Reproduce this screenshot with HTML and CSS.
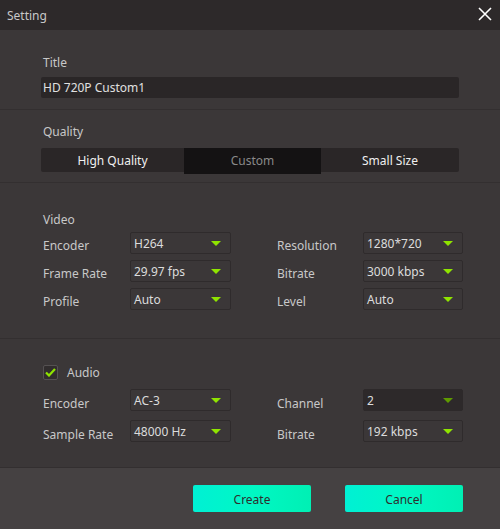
FILE: index.html
```html
<!DOCTYPE html>
<html lang="en">
<head>
    <meta charset="UTF-8">
    <title>Setting</title>
    <link rel="stylesheet" href="styles.css">
</head>
<body>
    <div class="dialog">
        <div class="titlebar">
            <span class="titlebar-text">Setting</span>
            <svg class="close" width="14" height="14" viewBox="0 0 14 14">
                <path d="M1 1L13 13M13 1L1 13" stroke="#fff" stroke-width="1.6" fill="none"/>
            </svg>
        </div>

        <div class="section section-title">
            <div class="label">Title</div>
            <div class="text-input">HD 720P Custom1</div>
        </div>

        <div class="section section-quality">
            <div class="label">Quality</div>
            <div class="segments">
                <div class="seg">High Quality</div>
                <div class="seg seg-active">Custom</div>
                <div class="seg">Small Size</div>
            </div>
        </div>

        <div class="section section-video">
            <div class="label">Video</div>
            <div class="grid">
                <div class="field-label">Encoder</div>
                <div class="select"><span>H264</span><i class="arrow"></i></div>
                <div class="field-label right">Resolution</div>
                <div class="select"><span>1280*720</span><i class="arrow"></i></div>

                <div class="field-label">Frame Rate</div>
                <div class="select"><span>29.97 fps</span><i class="arrow"></i></div>
                <div class="field-label right">Bitrate</div>
                <div class="select"><span>3000 kbps</span><i class="arrow"></i></div>

                <div class="field-label">Profile</div>
                <div class="select"><span>Auto</span><i class="arrow"></i></div>
                <div class="field-label right">Level</div>
                <div class="select"><span>Auto</span><i class="arrow"></i></div>
            </div>
        </div>

        <div class="section section-audio">
            <div class="check-row">
                <span class="checkbox">
                    <svg width="11" height="9" viewBox="0 0 11 9">
                        <path d="M1 4.5L4 7.5L10 1" stroke="#8fe400" stroke-width="2.2" fill="none"/>
                    </svg>
                </span>
                <span class="check-label">Audio</span>
            </div>
            <div class="grid grid-audio">
                <div class="field-label">Encoder</div>
                <div class="select"><span>AC-3</span><i class="arrow"></i></div>
                <div class="field-label right">Channel</div>
                <div class="select select-dim"><span>2</span><i class="arrow"></i></div>

                <div class="field-label">Sample Rate</div>
                <div class="select"><span>48000 Hz</span><i class="arrow"></i></div>
                <div class="field-label right">Bitrate</div>
                <div class="select"><span>192 kbps</span><i class="arrow"></i></div>
            </div>
        </div>

        <div class="footer">
            <button class="btn">Create</button>
            <button class="btn">Cancel</button>
        </div>
    </div>
</body>
</html>
```

FILE: styles.css
```css
body {
    margin: 0;
    font-family: 'Noto Sans', 'Open Sans', Arial, sans-serif;
    font-size: 12px;
    background-color: #3b3738;
    color: #c8c8c8;
}
.dialog {
    width: 500px;
    height: 529px;
    display: flex;
    flex-direction: column;
    background-color: #3b3738;
}
.titlebar {
    height: 30px;
    background-color: #2d292a;
    display: flex;
    align-items: center;
    justify-content: space-between;
    padding: 0 8px 0 7px;
}
.titlebar-text {
    color: #c8c8c8;
}
.close {
    display: block;
    margin-bottom: 2px;
}
.section {
    padding: 0 37px 0 41px;
    border-bottom: 1px solid #332f30;
}
.label {
    height: 16px;
    line-height: 18px;
    padding-left: 2px;
}
.section-title {
    padding-top: 24px;
    padding-bottom: 11px;
}
.text-input {
    margin-top: 7px;
    width: 418px;
    height: 21px;
    line-height: 22px;
    background-color: #2a2627;
    border-radius: 2px;
    padding-left: 2px;
    box-sizing: border-box;
    color: #e0e0e0;
}
.section-quality {
    padding-top: 13px;
    padding-bottom: 10px;
}
.segments {
    margin-top: 9px;
    width: 418px;
    height: 24px;
    display: grid;
    grid-template-columns: 143px 137px 138px;
    background-color: #2a2627;
    border-radius: 2px;
}
.seg {
    line-height: 26px;
    text-align: center;
    color: #f0f0f0;
}
.seg-active {
    background-color: #141213;
    color: #8a8a8a;
}
.section-video {
    padding-top: 28px;
    padding-bottom: 28px;
}
.grid {
    margin-top: 5px;
    display: grid;
    grid-template-columns: 89px 101px 132px 100px;
    row-gap: 6px;
}
.grid .right {
    margin-left: 46px;
    padding-left: 0;
}
.field-label {
    padding-left: 2px;
    height: 22px;
    line-height: 27px;
}
.select {
    height: 22px;
    box-sizing: border-box;
    border: 1px solid #2f2b2c;
    border-radius: 2px;
    display: flex;
    align-items: center;
    justify-content: space-between;
    padding: 1px 9px 0 3px;
    color: #dcdcdc;
}
.select-dim {
    background-color: #2d292a;
    border-color: #2d292a;
}
.arrow {
    width: 0;
    height: 0;
    border-left: 5px solid transparent;
    border-right: 5px solid transparent;
    border-top: 5px solid #8fe400;
}
.select-dim .arrow {
    border-top-color: #5f9a00;
}
.section-audio {
    padding-top: 26px;
    padding-bottom: 25px;
}
.check-row {
    display: flex;
    align-items: center;
    height: 15px;
    padding-left: 2px;
}
.checkbox {
    width: 15px;
    height: 15px;
    box-sizing: border-box;
    border: 1px solid #555152;
    border-radius: 2px;
    background-color: #312d2e;
    display: flex;
    align-items: center;
    justify-content: center;
}
.check-label {
    margin-left: 9px;
}
.grid-audio {
    margin-top: 9px;
    row-gap: 9px;
}
.grid-audio .field-label {
    line-height: 29px;
}
.footer {
    flex: 1;
    background-color: #454142;
    display: flex;
    justify-content: flex-end;
    align-items: flex-start;
    gap: 34px;
    padding: 17px 37px 0 0;
}
.btn {
    width: 118px;
    height: 27px;
    border: none;
    border-radius: 2px;
    background: linear-gradient(to right, #00f0d4, #00f8c4 50%, #00f0b4);
    color: #2e2e2e;
    font-family: 'Noto Sans', 'Open Sans', Arial, sans-serif;
    font-size: 12px;
    padding-top: 2px;
    cursor: pointer;
}
```
